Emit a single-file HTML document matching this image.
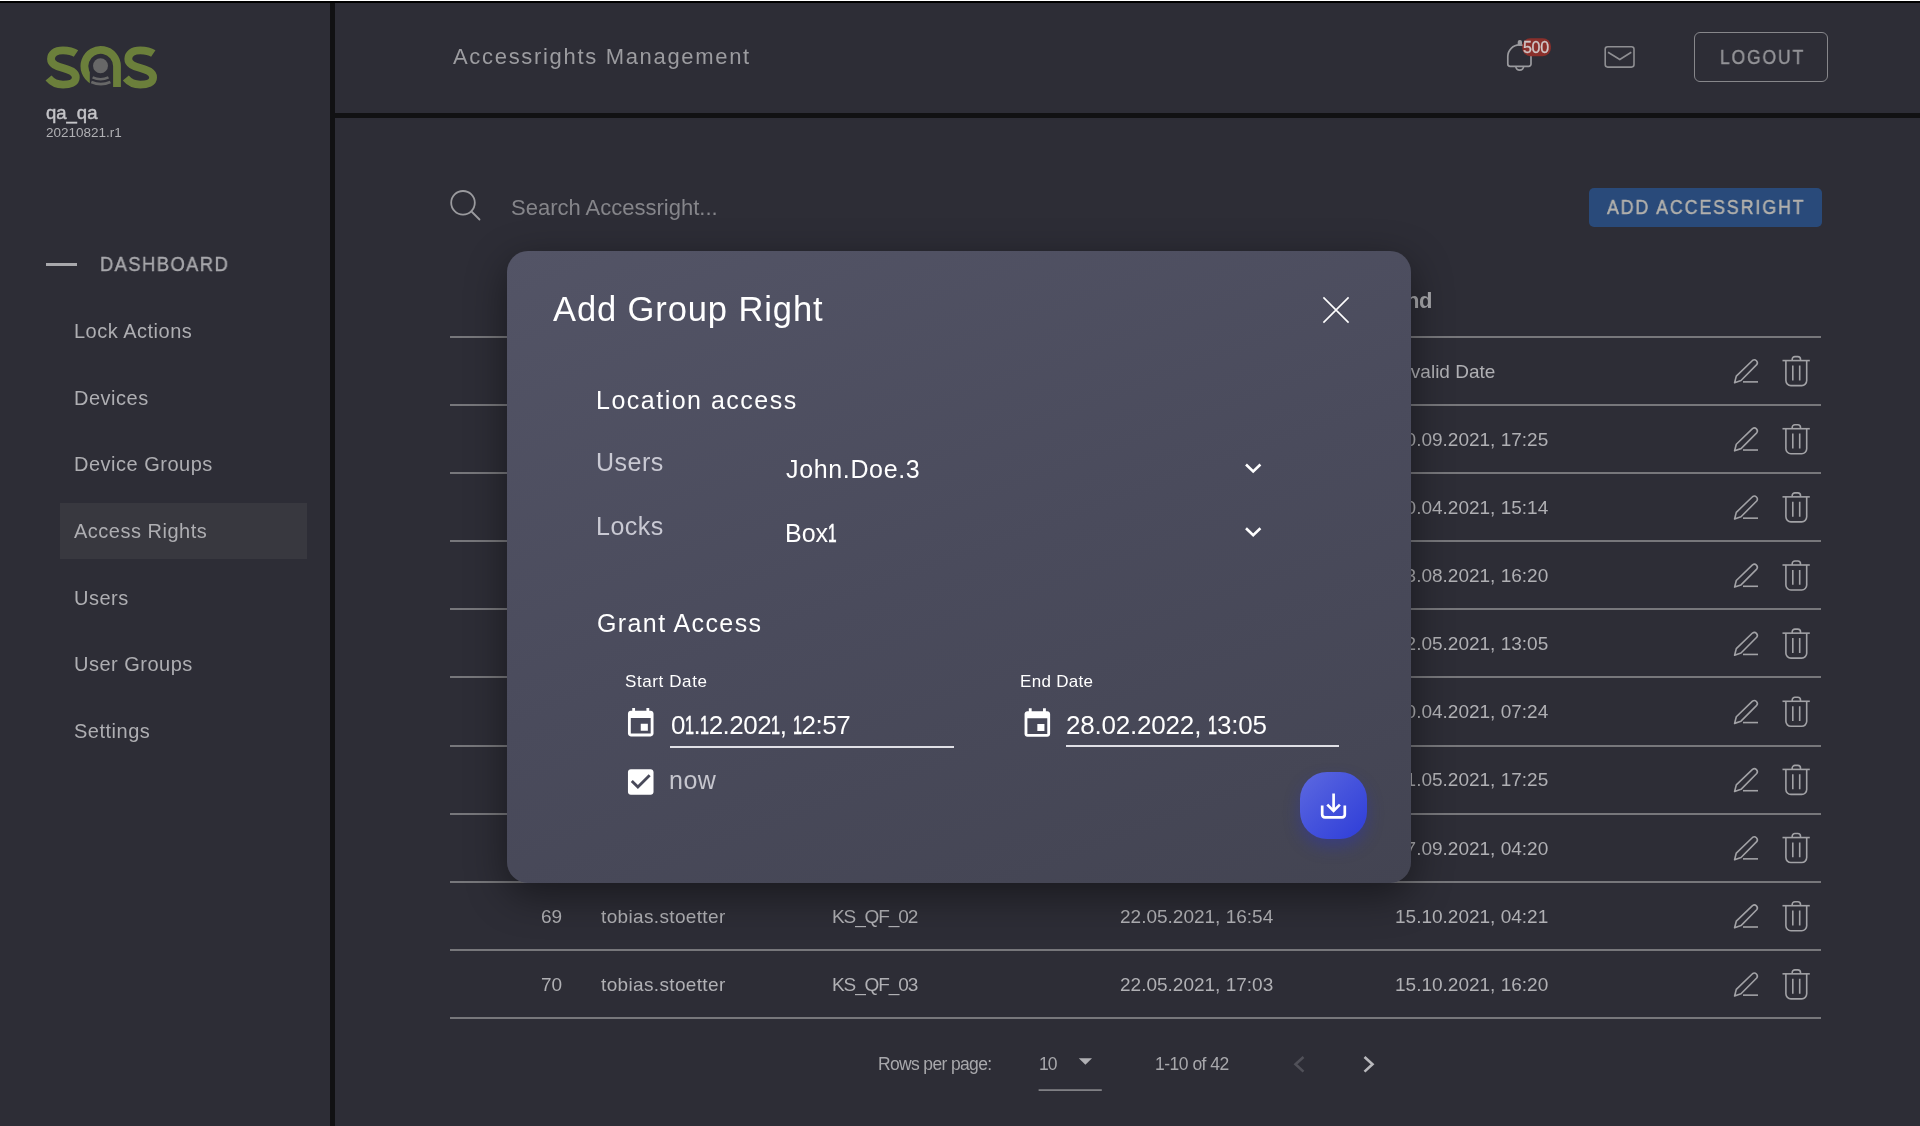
<!DOCTYPE html>
<html><head><meta charset="utf-8">
<style>
*{margin:0;padding:0;box-sizing:border-box}
html,body{width:1920px;height:1126px;overflow:hidden;background:#2d2d36;font-family:"Liberation Sans",sans-serif}
.a{position:absolute;white-space:nowrap;line-height:1;will-change:transform}
.ln{position:absolute;left:450px;width:1371px;height:2px;background:#77777b}
svg{position:absolute;overflow:visible}
i{font-style:normal;display:inline-block;transform:scaleX(0.62);transform-origin:0 50%;margin-right:-5.5px;-webkit-text-stroke:0.6px #fff}
</style></head><body>
<div class="a" style="left:0;top:0;width:1920px;height:1px;background:#fff"></div>
<div class="a" style="left:0;top:1px;width:1920px;height:2px;background:#000"></div>
<div class="a" style="left:330px;top:3px;width:5px;height:1123px;background:#111113"></div>
<div class="a" style="left:335px;top:112.6px;width:1585px;height:5px;background:#111113"></div>
<svg style="left:40px;top:40px" width="125" height="55" viewBox="0 0 125 55">
<defs><clipPath id="lc"><path clip-rule="evenodd" d="M0,0H125V55H0Z M49.8,28 H72 V55 H49.8 Z"/></clipPath></defs>
<g fill="none" stroke="#6b7f3b" stroke-width="7.8">
<path d="M36,13.5 C32,10.8 27.5,10.3 23,10.3 C15,10.3 11,14 11,19 C11,24 16,26 23,28 C30,30 35.8,32 35.8,37.5 C35.8,42.5 30,44.6 23,44.6 C17,44.6 12,42.2 8.5,38"/>
<path transform="translate(77.3,0)" d="M36,13.5 C32,10.8 27.5,10.3 23,10.3 C15,10.3 11,14 11,19 C11,24 16,26 23,28 C30,30 35.8,32 35.8,37.5 C35.8,42.5 30,44.6 23,44.6 C17,44.6 12,42.2 8.5,38"/>
<path clip-path="url(#lc)" d="M52.55,40.3 A16.3,16.3 0 1 1 77,26.2 L77,47"/>
</g>
<circle cx="60.5" cy="25.7" r="7.5" fill="#676767"/>
<g fill="none" stroke="#676767" stroke-width="2.6">
<path d="M52.6,37.4 Q60.5,41 68.5,37.4"/>
<path d="M51.3,42 Q60.8,46.2 70.4,42"/>
</g>
</svg>
<div class="a " style="left:46.0px;top:103.7px;font-size:18.5px;color:#c4c4c8;-webkit-text-stroke:0.45px #c4c4c8">qa_qa</div>
<div class="a " style="left:46.0px;top:126.3px;font-size:13.5px;color:#b0b0b4;">20210821.r1</div>
<div class="a" style="left:46px;top:263px;width:31px;height:3px;background:#a8a8ac"></div>
<div class="a " style="left:100.0px;top:254.5px;font-size:19.5px;color:#a8a8ac;letter-spacing:1.5px;-webkit-text-stroke:0.4px #a8a8ac;transform:scaleX(0.943);transform-origin:0 0">DASHBOARD</div>
<div class="a" style="left:60px;top:503px;width:247px;height:56px;background:#38383f"></div>
<div class="a " style="left:74.0px;top:321.1px;font-size:20px;color:#aeaeb2;letter-spacing:0.5px">Lock Actions</div>
<div class="a " style="left:74.0px;top:387.7px;font-size:20px;color:#aeaeb2;letter-spacing:0.5px">Devices</div>
<div class="a " style="left:74.0px;top:454.4px;font-size:20px;color:#aeaeb2;letter-spacing:0.5px">Device Groups</div>
<div class="a " style="left:74.0px;top:521.1px;font-size:20px;color:#aeaeb2;letter-spacing:0.5px">Access Rights</div>
<div class="a " style="left:74.0px;top:587.8px;font-size:20px;color:#aeaeb2;letter-spacing:0.5px">Users</div>
<div class="a " style="left:74.0px;top:654.4px;font-size:20px;color:#aeaeb2;letter-spacing:0.5px">User Groups</div>
<div class="a " style="left:74.0px;top:721.1px;font-size:20px;color:#aeaeb2;letter-spacing:0.5px">Settings</div>
<div class="a " style="left:453.0px;top:45.6px;font-size:22px;color:#9c9ca0;letter-spacing:1.68px">Accessrights Management</div>
<svg style="left:0;top:0" width="1920" height="120">
<g fill="none" stroke="#9a9a9e" stroke-width="1.7">
<path d="M1507.8,64 V56.5 A11.6,11.6 0 0 1 1531,56.5 V64 A2.3,2.3 0 0 1 1528.7,66.3 H1510.1 A2.3,2.3 0 0 1 1507.8,64 Z"/>
<path d="M1515.8,66.3 A3.9,3.9 0 0 0 1523.6,66.3"/>
<rect x="1605.2" y="46.8" width="28.8" height="20.3" rx="2.5" stroke="#8e8e92" stroke-width="1.6"/>
<path d="M1608,52.3 L1619.8,59.5 L1631.3,52.3" stroke="#8e8e92" stroke-width="1.6"/>
</g>
<rect x="1517.7" y="40" width="4.3" height="6" rx="2" fill="#9a9a9e"/>
<rect x="1522.3" y="38.2" width="28.6" height="18" rx="8" fill="#8a2f2b"/>
</svg>
<div class="a " style="left:1523.0px;top:39.9px;font-size:16px;color:#cfc8c8;letter-spacing:-0.3px;-webkit-text-stroke:0.3px #cfc8c8">500</div>
<div class="a" style="left:1694px;top:32px;width:134px;height:50px;border:1.8px solid #87878b;border-radius:6px"></div>
<div class="a " style="left:1720.0px;top:46.7px;font-size:20px;color:#949498;letter-spacing:2.2px;-webkit-text-stroke:0.45px #949498;transform:scaleX(0.872);transform-origin:0 0">LOGOUT</div>
<svg style="left:0;top:0" width="1920" height="240">
<g fill="none" stroke="#9a9a9e" stroke-width="1.8">
<circle cx="463" cy="202.8" r="11.8"/>
<path d="M471.5,211.5 L479.5,219.5" stroke-linecap="round"/>
</g></svg>
<div class="a " style="left:511.0px;top:197.0px;font-size:22px;color:#85858a;">Search Accessright...</div>
<div class="a" style="left:1588.5px;top:187.8px;width:232.5px;height:38.5px;background:#294a7a;border-radius:5px"></div>
<div class="a " style="left:1607.0px;top:198.1px;font-size:19.5px;color:#b3b1ac;letter-spacing:2.1px;-webkit-text-stroke:0.45px #b3b1ac;transform:scaleX(0.911);transform-origin:0 0">ADD ACCESSRIGHT</div>
<div class="a " style="left:1392.0px;top:290.1px;font-size:22px;color:#a8a8ac;font-weight:bold;letter-spacing:-0.6px">End</div>
<div class="ln" style="top:336px"></div>
<div class="ln" style="top:404px"></div>
<div class="ln" style="top:472px"></div>
<div class="ln" style="top:540px"></div>
<div class="ln" style="top:608px"></div>
<div class="ln" style="top:676px"></div>
<div class="ln" style="top:745px"></div>
<div class="ln" style="top:813px"></div>
<div class="ln" style="top:881px"></div>
<div class="ln" style="top:949px"></div>
<div class="ln" style="top:1017px"></div>
<div class="a " style="left:541.0px;top:361.6px;font-size:19px;color:#b0b0b4;">61</div>
<div class="a " style="left:601.0px;top:361.6px;font-size:19px;color:#b0b0b4;letter-spacing:0.35px">tobias.stoetter</div>
<div class="a " style="left:832.0px;top:361.6px;font-size:19px;color:#b0b0b4;letter-spacing:-1.1px">KS_QF_01</div>
<div class="a " style="left:1120.0px;top:361.6px;font-size:19px;color:#b0b0b4;">22.05.2021, 16:40</div>
<div class="a " style="left:1395.0px;top:361.6px;font-size:19px;color:#b0b0b4;">Invalid Date</div>
<div class="a " style="left:541.0px;top:429.7px;font-size:19px;color:#b0b0b4;">62</div>
<div class="a " style="left:601.0px;top:429.7px;font-size:19px;color:#b0b0b4;letter-spacing:0.35px">tobias.stoetter</div>
<div class="a " style="left:832.0px;top:429.7px;font-size:19px;color:#b0b0b4;letter-spacing:-1.1px">KS_QF_02</div>
<div class="a " style="left:1120.0px;top:429.7px;font-size:19px;color:#b0b0b4;">22.05.2021, 16:41</div>
<div class="a " style="left:1395.0px;top:429.7px;font-size:19px;color:#b0b0b4;">30.09.2021, 17:25</div>
<div class="a " style="left:541.0px;top:497.9px;font-size:19px;color:#b0b0b4;">63</div>
<div class="a " style="left:601.0px;top:497.9px;font-size:19px;color:#b0b0b4;letter-spacing:0.35px">tobias.stoetter</div>
<div class="a " style="left:832.0px;top:497.9px;font-size:19px;color:#b0b0b4;letter-spacing:-1.1px">KS_QF_03</div>
<div class="a " style="left:1120.0px;top:497.9px;font-size:19px;color:#b0b0b4;">22.05.2021, 16:42</div>
<div class="a " style="left:1395.0px;top:497.9px;font-size:19px;color:#b0b0b4;">30.04.2021, 15:14</div>
<div class="a " style="left:541.0px;top:566.0px;font-size:19px;color:#b0b0b4;">64</div>
<div class="a " style="left:601.0px;top:566.0px;font-size:19px;color:#b0b0b4;letter-spacing:0.35px">tobias.stoetter</div>
<div class="a " style="left:832.0px;top:566.0px;font-size:19px;color:#b0b0b4;letter-spacing:-1.1px">KS_QF_01</div>
<div class="a " style="left:1120.0px;top:566.0px;font-size:19px;color:#b0b0b4;">22.05.2021, 16:43</div>
<div class="a " style="left:1395.0px;top:566.0px;font-size:19px;color:#b0b0b4;">13.08.2021, 16:20</div>
<div class="a " style="left:541.0px;top:634.2px;font-size:19px;color:#b0b0b4;">65</div>
<div class="a " style="left:601.0px;top:634.2px;font-size:19px;color:#b0b0b4;letter-spacing:0.35px">tobias.stoetter</div>
<div class="a " style="left:832.0px;top:634.2px;font-size:19px;color:#b0b0b4;letter-spacing:-1.1px">KS_QF_02</div>
<div class="a " style="left:1120.0px;top:634.2px;font-size:19px;color:#b0b0b4;">22.05.2021, 16:44</div>
<div class="a " style="left:1395.0px;top:634.2px;font-size:19px;color:#b0b0b4;">12.05.2021, 13:05</div>
<div class="a " style="left:541.0px;top:702.3px;font-size:19px;color:#b0b0b4;">66</div>
<div class="a " style="left:601.0px;top:702.3px;font-size:19px;color:#b0b0b4;letter-spacing:0.35px">tobias.stoetter</div>
<div class="a " style="left:832.0px;top:702.3px;font-size:19px;color:#b0b0b4;letter-spacing:-1.1px">KS_QF_03</div>
<div class="a " style="left:1120.0px;top:702.3px;font-size:19px;color:#b0b0b4;">22.05.2021, 16:45</div>
<div class="a " style="left:1395.0px;top:702.3px;font-size:19px;color:#b0b0b4;">30.04.2021, 07:24</div>
<div class="a " style="left:541.0px;top:770.4px;font-size:19px;color:#b0b0b4;">67</div>
<div class="a " style="left:601.0px;top:770.4px;font-size:19px;color:#b0b0b4;letter-spacing:0.35px">tobias.stoetter</div>
<div class="a " style="left:832.0px;top:770.4px;font-size:19px;color:#b0b0b4;letter-spacing:-1.1px">KS_QF_01</div>
<div class="a " style="left:1120.0px;top:770.4px;font-size:19px;color:#b0b0b4;">22.05.2021, 16:46</div>
<div class="a " style="left:1395.0px;top:770.4px;font-size:19px;color:#b0b0b4;">31.05.2021, 17:25</div>
<div class="a " style="left:541.0px;top:838.6px;font-size:19px;color:#b0b0b4;">68</div>
<div class="a " style="left:601.0px;top:838.6px;font-size:19px;color:#b0b0b4;letter-spacing:0.35px">tobias.stoetter</div>
<div class="a " style="left:832.0px;top:838.6px;font-size:19px;color:#b0b0b4;letter-spacing:-1.1px">KS_QF_02</div>
<div class="a " style="left:1120.0px;top:838.6px;font-size:19px;color:#b0b0b4;">22.05.2021, 16:47</div>
<div class="a " style="left:1395.0px;top:838.6px;font-size:19px;color:#b0b0b4;">17.09.2021, 04:20</div>
<div class="a " style="left:541.0px;top:906.7px;font-size:19px;color:#b0b0b4;">69</div>
<div class="a " style="left:601.0px;top:906.7px;font-size:19px;color:#b0b0b4;letter-spacing:0.35px">tobias.stoetter</div>
<div class="a " style="left:832.0px;top:906.7px;font-size:19px;color:#b0b0b4;letter-spacing:-1.1px">KS_QF_02</div>
<div class="a " style="left:1120.0px;top:906.7px;font-size:19px;color:#b0b0b4;">22.05.2021, 16:54</div>
<div class="a " style="left:1395.0px;top:906.7px;font-size:19px;color:#b0b0b4;">15.10.2021, 04:21</div>
<div class="a " style="left:541.0px;top:974.9px;font-size:19px;color:#b0b0b4;">70</div>
<div class="a " style="left:601.0px;top:974.9px;font-size:19px;color:#b0b0b4;letter-spacing:0.35px">tobias.stoetter</div>
<div class="a " style="left:832.0px;top:974.9px;font-size:19px;color:#b0b0b4;letter-spacing:-1.1px">KS_QF_03</div>
<div class="a " style="left:1120.0px;top:974.9px;font-size:19px;color:#b0b0b4;">22.05.2021, 17:03</div>
<div class="a " style="left:1395.0px;top:974.9px;font-size:19px;color:#b0b0b4;">15.10.2021, 16:20</div>
<svg style="left:0;top:0" width="1920" height="1126">
<defs><g id="ic" fill="none" stroke="#a2a2a6" stroke-width="1.6" stroke-linejoin="round">
<path d="M1734.6,11.8 L1736.3,5.2 L1752.5,-10.4 A3,3 0 0 1 1756.7,-6.2 L1741,9.6 Z"/>
<path d="M1743,11 H1758"/>
<path d="M1782.5,-10.3 H1809.8"/>
<path d="M1792.2,-10.3 V-11.6 A2.7,2.7 0 0 1 1794.9,-14.3 H1797.8 A2.7,2.7 0 0 1 1800.5,-11.6 V-10.3"/>
<path d="M1785.9,-10.3 V9.7 A5,5 0 0 0 1790.9,14.7 H1801.7 A5,5 0 0 0 1806.7,9.7 V-10.3"/>
<path d="M1792.8,-5.4 V9.5 M1799.7,-5.4 V9.5"/>
</g></defs>
<use href="#ic" transform="translate(0,370.88)"/>
<use href="#ic" transform="translate(0,439.02)"/>
<use href="#ic" transform="translate(0,507.15999999999997)"/>
<use href="#ic" transform="translate(0,575.3)"/>
<use href="#ic" transform="translate(0,643.44)"/>
<use href="#ic" transform="translate(0,711.5799999999999)"/>
<use href="#ic" transform="translate(0,779.72)"/>
<use href="#ic" transform="translate(0,847.86)"/>
<use href="#ic" transform="translate(0,916.0)"/>
<use href="#ic" transform="translate(0,984.14)"/>
</svg>
<div class="a " style="left:878.0px;top:1056.2px;font-size:17.5px;color:#a8a8ac;letter-spacing:-0.65px">Rows per page:</div>
<div class="a " style="left:1039.0px;top:1056.2px;font-size:17.5px;color:#a8a8ac;letter-spacing:-1px">10</div>
<div class="a " style="left:1155.0px;top:1056.2px;font-size:17.5px;color:#a8a8ac;letter-spacing:-0.5px">1-10 of 42</div>
<svg style="left:0;top:0" width="1920" height="1126">
<path d="M1078.8,1058.3 H1092 L1085.4,1064.7 Z" fill="#b0b0b4"/>
<rect x="1038.6" y="1089.3" width="63.2" height="1.6" fill="#8a8a8e"/>
<path d="M1303.5,1057 L1295.5,1064.3 L1303.5,1071.6" fill="none" stroke="#505058" stroke-width="2.6"/>
<path d="M1364.5,1057 L1372.5,1064.3 L1364.5,1071.6" fill="none" stroke="#b8b8bc" stroke-width="2.6"/>
</svg>
<div class="a" style="left:507px;top:251px;width:904px;height:632px;border-radius:21px;background:linear-gradient(160deg,#535466 0%,#4a4b5c 50%,#434452 100%);box-shadow:0 12px 40px rgba(0,0,0,0.45)"></div>
<div class="a " style="left:553.4px;top:291.8px;font-size:34.5px;color:#ffffff;letter-spacing:0.9px">Add Group Right</div>
<svg style="left:0;top:0" width="1920" height="1126">
<g stroke="#ffffff" stroke-width="1.6" fill="none">
<path d="M1323.4,297.4 L1348.6,322.6 M1348.6,297.4 L1323.4,322.6"/>
</g>
<g stroke="#ffffff" stroke-width="2.6" fill="none">
<path d="M1246,464.5 L1253.2,471.5 L1260.4,464.5"/>
<path d="M1246,528.3 L1253.2,535.3 L1260.4,528.3"/>
</g>
</svg>
<div class="a " style="left:595.8px;top:388.4px;font-size:25px;color:#ffffff;letter-spacing:1.5px">Location access</div>
<div class="a " style="left:595.8px;top:449.8px;font-size:25px;color:#c9c9d3;letter-spacing:0.5px">Users</div>
<div class="a " style="left:786.3px;top:456.7px;font-size:25px;color:#ffffff;letter-spacing:0.65px">John.Doe.3</div>
<div class="a " style="left:595.8px;top:513.5px;font-size:25px;color:#c9c9d3;letter-spacing:0.5px">Locks</div>
<div class="a " style="left:784.8px;top:521.0px;font-size:25px;color:#ffffff;letter-spacing:0px">Box<i>1</i></div>
<div class="a " style="left:597.0px;top:610.5px;font-size:25px;color:#ffffff;letter-spacing:1.4px">Grant Access</div>
<div class="a " style="left:624.5px;top:673.1px;font-size:17px;color:#ffffff;letter-spacing:0.6px">Start Date</div>
<div class="a " style="left:1019.8px;top:673.1px;font-size:17px;color:#ffffff;letter-spacing:0.3px">End Date</div>
<div class="a " style="left:671.1px;top:712.2px;font-size:26px;color:#ffffff;letter-spacing:-0.5px">0<i>1</i>.<i>1</i>2.202<i>1</i>, <i>1</i>2:57</div>
<div class="a " style="left:1066.0px;top:712.0px;font-size:26px;color:#ffffff;letter-spacing:-0.2px">28.02.2022, <i>1</i>3:05</div>
<div class="a" style="left:670px;top:745.5px;width:284px;height:1.6px;background:#e0e0e6"></div>
<div class="a" style="left:1066px;top:745.3px;width:273px;height:1.6px;background:#e0e0e6"></div>
<svg style="left:0;top:0" width="1920" height="1126">
<g fill="#ffffff">
<path transform="translate(623.7,706.6) scale(1.42)" d="M17 12h-5v5h5v-5zM16 1v2H8V1H6v2H5c-1.11 0-1.99.9-1.99 2L3 19c0 1.1.89 2 2 2h14c1.1 0 2-.9 2-2V5c0-1.1-.9-2-2-2h-1V1h-2zm3 18H5V8h14v11z"/>
<path transform="translate(1020.3,706.9) scale(1.42)" d="M17 12h-5v5h5v-5zM16 1v2H8V1H6v2H5c-1.11 0-1.99.9-1.99 2L3 19c0 1.1.89 2 2 2h14c1.1 0 2-.9 2-2V5c0-1.1-.9-2-2-2h-1V1h-2zm3 18H5V8h14v11z"/>
<path transform="translate(623.7,764.9) scale(1.42)" d="M19 3H5c-1.11 0-2 .9-2 2v14c0 1.1.89 2 2 2h14c1.11 0 2-.9 2-2V5c0-1.1-.89-2-2-2zm-9 14l-5-5 1.41-1.41L10 14.17l7.59-7.59L19 8l-9 9z"/>
</g>
</svg>
<div class="a " style="left:668.8px;top:767.8px;font-size:25px;color:#c6c6ce;letter-spacing:0.5px">now</div>
<div class="a" style="left:1300px;top:772px;width:67px;height:67px;border-radius:27px;background:linear-gradient(135deg,#5d69e0 0%,#4452dc 50%,#2e3dd8 100%);box-shadow:0 8px 16px rgba(40,50,200,0.35)"></div>
<svg style="left:0;top:0" width="1920" height="1126">
<g fill="none" stroke="#ffffff" stroke-width="2.7">
<path d="M1333.6,793.5 V810.5"/>
<path d="M1327.3,804.6 L1333.6,810.9 L1339.9,804.6"/>
<path d="M1322.2,805.5 V814.6 Q1322.2,817.4 1325,817.4 H1342 Q1344.8,817.4 1344.8,814.6 V805.5"/>
</g>
</svg>
</body></html>
